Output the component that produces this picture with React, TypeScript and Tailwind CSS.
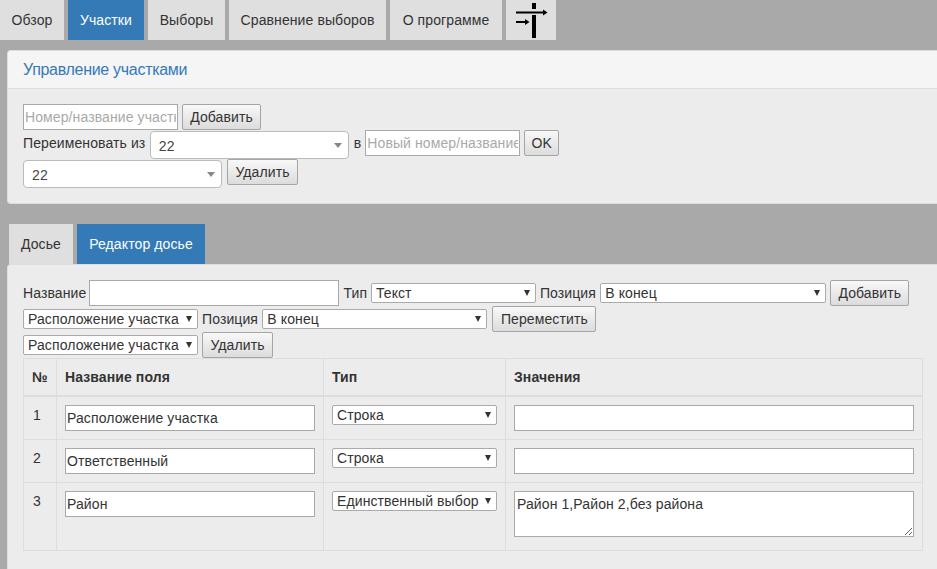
import React from "react";

const font = { fontFamily: '"Liberation Sans", Arial, sans-serif' };

function Tab({ label, active, className = "" }: { label: string; active?: boolean; className?: string }) {
  return (
    <div className={`flex h-10 items-center justify-center text-sm ${active ? "bg-[#337ab7] text-white" : "bg-[#dfdfdf] text-[#333]"} ${className}`}>
      {label}
    </div>
  );
}

function Btn({ label, className = "" }: { label: string; className?: string }) {
  return (
    <button className={`flex h-[26px] shrink-0 items-center justify-center rounded-[2px] border border-[#a5a5a5] bg-gradient-to-b from-[#f8f8f8] to-[#dcdcdc] text-sm text-[#333] ${className}`}>
      {label}
    </button>
  );
}

function Sel2({ value, className = "" }: { value: string; className?: string }) {
  return (
    <div className={`flex h-[28px] w-[199px] shrink-0 items-center justify-between rounded-[4px] border border-[#bbb] bg-white pr-[6px] pl-[8px] text-sm text-[#444] ${className}`}>
      <span className="pt-[2px]">{value}</span>
      <span className="h-0 w-0 border-x-[4px] border-t-[5px] border-x-transparent border-t-[#888]" />
    </div>
  );
}

function Sel({ value, className = "" }: { value: string; className?: string }) {
  return (
    <div className={`flex h-[20px] shrink-0 items-center justify-between overflow-hidden rounded-[2px] border border-[#aaa] bg-white pr-[5px] pl-[4px] text-sm whitespace-nowrap text-[#333] ${className}`}>
      <span className="overflow-hidden">{value}</span>
      <span className="ml-[3px] h-0 w-0 shrink-0 border-x-[3.5px] border-t-[6px] border-x-transparent border-t-[#333]" />
    </div>
  );
}

function Input({ value = "", placeholder, className = "" }: { value?: string; placeholder?: string; className?: string }) {
  return (
    <input
      readOnly
      value={value}
      placeholder={placeholder}
      className={`h-[26px] shrink-0 border border-[#a9a9a9] bg-white px-[1px] text-sm text-[#333] outline-none placeholder:text-[#a9a9a9] ${className}`}
      style={font}
    />
  );
}

const rows = [
  { n: "1", name: "Расположение участка", type: "Строка", h: "h-[43px]" },
  { n: "2", name: "Ответственный", type: "Строка", h: "h-[43px]" },
  { n: "3", name: "Район", type: "Единственный выбор", h: "h-[68px]" },
];

export default function App() {
  return (
    <div className="h-[569px] w-[937px] overflow-hidden bg-[#a9a9a9] text-sm tracking-[0.1px] text-[#333]" style={font}>
      <div className="flex h-10">
        <Tab label="Обзор" className="w-16" />
        <Tab label="Участки" active className="ml-1 w-[76px]" />
        <Tab label="Выборы" className="ml-1 w-[77px]" />
        <Tab label="Сравнение выборов" className="ml-1 w-[157px]" />
        <Tab label="О программе" className="ml-1 w-[112px]" />
        <div className="ml-1 h-10 w-[50px] bg-[#dfdfdf]">
          <svg width="50" height="40" viewBox="0 0 50 40">
            <rect x="26" y="3" width="4" height="6" fill="#000" />
            <rect x="26" y="15" width="4" height="23" fill="#000" />
            <rect x="10" y="11.5" width="28" height="2" fill="#000" />
            <path d="M37 9.5l4.5 3-4.5 3z" fill="#000" />
            <rect x="10" y="21" width="10" height="2" fill="#000" />
            <path d="M19 19l4.5 3-4.5 3z" fill="#000" />
          </svg>
        </div>
      </div>

      <div className="mt-[10px] ml-[7px] h-[154px] w-[940px] overflow-hidden rounded-l-[4px] border border-r-0 border-[#ddd] bg-[#ececec]">
        <div className="flex h-[38px] items-center border-b border-[#ddd] bg-[#f5f5f5] pl-[15px] text-base tracking-[-0.3px] text-[#337ab7]">
          Управление участками
        </div>
        <div className="pt-[15px] pl-[15px]">
          <div className="flex h-[26px] gap-1">
            <Input placeholder="Номер/название участка" className="w-[155px]" />
            <Btn label="Добавить" className="w-[79px]" />
          </div>
          <div className="flex h-[29px] items-start">
            <span className="mt-[3px] mr-[4.4px] leading-5">Переименовать из</span>
            <Sel2 value="22" className="mt-[1px]" />
            <span className="mt-[3px] mr-[4px] ml-[5px] leading-5">в</span>
            <Input placeholder="Новый номер/название" className="w-[155px]" />
            <Btn label="OK" className="ml-1 w-[35px]" />
          </div>
          <div className="flex items-start">
            <Sel2 value="22" className="mt-[1px]" />
            <Btn label="Удалить" className="ml-[5px] w-[71px]" />
          </div>
        </div>
      </div>

      <div className="mt-5 ml-[9px] flex h-10 gap-1">
        <Tab label="Досье" className="w-16" />
        <Tab label="Редактор досье" active className="w-[128px]" />
      </div>

      <div className="ml-[7px] h-[305px] w-[930px] rounded-tl-[4px] border-t border-l border-[#ddd] bg-[#ececec] pt-[15px] pl-[15px]">
        <div className="flex h-[26px] items-center">
          <span className="mr-[2.2px]">Название</span>
          <Input className="w-[250px]" />
          <span className="mr-[3.7px] ml-[5px]">Тип</span>
          <Sel value="Текст" className="w-[165px]" />
          <span className="mr-[4.3px] ml-1">Позиция</span>
          <Sel value="В конец" className="w-[226px]" />
          <Btn label="Добавить" className="ml-1 w-[79px]" />
        </div>
        <div className="flex h-[26px] items-center">
          <Sel value="Расположение участка" className="w-[175px]" />
          <span className="mr-[4.3px] ml-1">Позиция</span>
          <Sel value="В конец" className="w-[225px]" />
          <Btn label="Переместить" className="ml-[5px] w-[104px]" />
        </div>
        <div className="flex h-[26px] items-center">
          <Sel value="Расположение участка" className="w-[175px]" />
          <Btn label="Удалить" className="ml-1 w-[71px]" />
        </div>

        <div className="w-[900px] border-x border-t border-[#ddd]">
          <div className="grid h-[38px] grid-cols-[32px_267px_182px_1fr] border-b-2 border-[#ddd] font-bold">
            <div className="flex items-center pl-[8px]">№</div>
            <div className="flex items-center border-l border-[#ddd] pl-[8px]">Название поля</div>
            <div className="flex items-center border-l border-[#ddd] pl-[8px]">Тип</div>
            <div className="flex items-center border-l border-[#ddd] pl-[8px]">Значения</div>
          </div>
          {rows.map((r) => (
            <div key={r.n} className={`grid grid-cols-[32px_267px_182px_1fr] border-b border-[#ddd] ${r.h}`}>
              <div className="pt-[8px] pl-[9px] leading-5">{r.n}</div>
              <div className="border-l border-[#ddd] pt-[8px] pl-[8px]">
                <Input value={r.name} className="w-[250px]" />
              </div>
              <div className="border-l border-[#ddd] pt-[8px] pl-[8px]">
                <Sel value={r.type} className="w-[165px]" />
              </div>
              <div className="border-l border-[#ddd] pt-[8px] pl-[8px]">
                {r.n === "3" ? (
                  <textarea
                    readOnly
                    value="Район 1,Район 2,без района"
                    className="block h-[46px] w-[400px] border border-[#a9a9a9] bg-white px-[2px] py-[2px] text-sm text-[#333] outline-none"
                    style={font}
                  />
                ) : (
                  <Input className="w-[400px]" />
                )}
              </div>
            </div>
          ))}
        </div>
      </div>
    </div>
  );
}
